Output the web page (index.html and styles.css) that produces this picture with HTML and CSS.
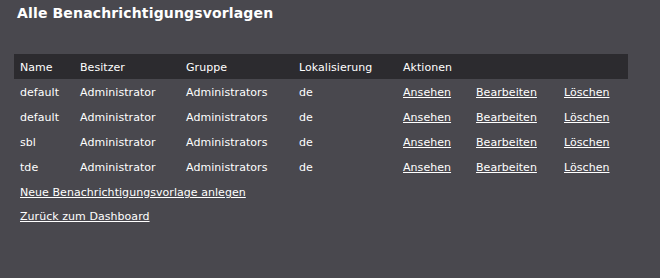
FILE: index.html
```html
<!DOCTYPE html>
<html lang="de">
<head>
    <meta charset="UTF-8">
    <title>Alle Benachrichtigungsvorlagen</title>
    <link rel="stylesheet" href="styles.css">
</head>
<body>
    <div class="content">
        <h1>Alle Benachrichtigungsvorlagen</h1>
        <table class="templates">
            <colgroup>
                <col class="c-name">
                <col class="c-owner">
                <col class="c-group">
                <col class="c-locale">
                <col class="c-view">
                <col class="c-edit">
                <col class="c-delete">
            </colgroup>
            <thead>
                <tr>
                    <th>Name</th>
                    <th>Besitzer</th>
                    <th>Gruppe</th>
                    <th>Lokalisierung</th>
                    <th colspan="3">Aktionen</th>
                </tr>
            </thead>
            <tbody>
                <tr>
                    <td>default</td><td>Administrator</td><td>Administrators</td><td>de</td>
                    <td><a href="#">Ansehen</a></td><td><a href="#">Bearbeiten</a></td><td><a href="#">Löschen</a></td>
                </tr>
                <tr>
                    <td>default</td><td>Administrator</td><td>Administrators</td><td>de</td>
                    <td><a href="#">Ansehen</a></td><td><a href="#">Bearbeiten</a></td><td><a href="#">Löschen</a></td>
                </tr>
                <tr>
                    <td>sbl</td><td>Administrator</td><td>Administrators</td><td>de</td>
                    <td><a href="#">Ansehen</a></td><td><a href="#">Bearbeiten</a></td><td><a href="#">Löschen</a></td>
                </tr>
                <tr>
                    <td>tde</td><td>Administrator</td><td>Administrators</td><td>de</td>
                    <td><a href="#">Ansehen</a></td><td><a href="#">Bearbeiten</a></td><td><a href="#">Löschen</a></td>
                </tr>
            </tbody>
        </table>
        <div class="links">
            <a href="#">Neue Benachrichtigungsvorlage anlegen</a>
            <a href="#">Zurück zum Dashboard</a>
        </div>
    </div>
</body>
</html>
```

FILE: styles.css
```css
body {
    margin: 0;
    background-color: #49484e;
    color: #ffffff;
    font-family: 'DejaVu Sans', Verdana, sans-serif;
    font-size: 11px;
    letter-spacing: 0.05px;
}
.content {
    padding: 4px 14px;
}
.content h1 {
    margin: 0 0 0 3px;
    font-size: 14px;
    line-height: 18px;
    font-weight: bold;
    letter-spacing: 0.15px;
}
.templates {
    margin-top: 32px;
    border-collapse: collapse;
    table-layout: fixed;
    width: 614px;
}
.templates th,
.templates td {
    padding: 1px 0 0 6px;
    height: 24px;
    text-align: left;
    white-space: nowrap;
}
.templates th {
    background-color: #2c2b2f;
    font-weight: normal;
}
.templates .c-name { width: 60px; }
.templates .c-owner { width: 106px; }
.templates .c-group { width: 113px; }
.templates .c-locale { width: 104px; }
.templates .c-view { width: 73px; }
.templates .c-edit { width: 88px; }
.templates .c-delete { width: 70px; }
a {
    color: #ffffff;
    text-decoration: underline;
}
.links {
    display: flex;
    flex-direction: column;
    align-items: flex-start;
    gap: 11px;
    padding: 7px 0 0 6px;
}
```
